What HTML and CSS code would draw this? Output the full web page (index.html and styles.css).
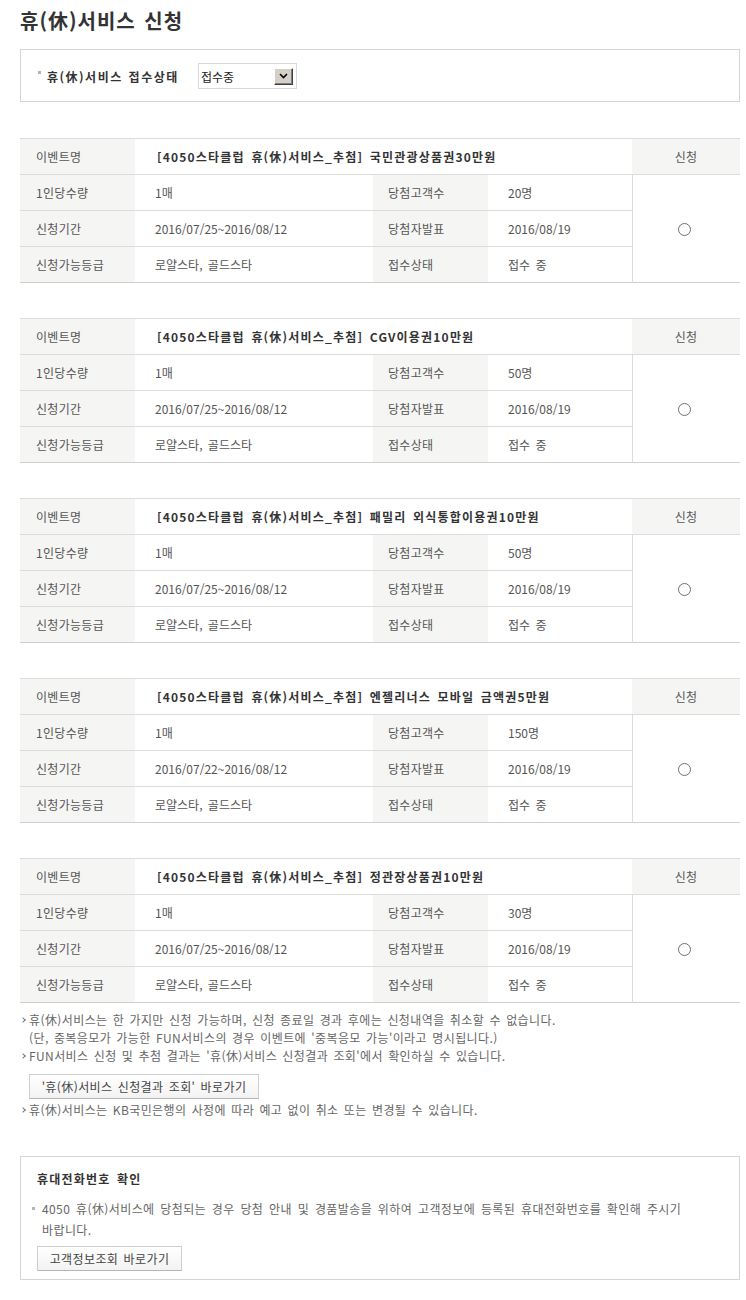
FILE: index.html
```html
<!DOCTYPE html>
<html lang="ko">
<head>
<meta charset="utf-8">
<title>휴(休)서비스 신청</title>
<link rel="stylesheet" href="styles.css">
</head>
<body>
<div class="page">
  <h1 class="title">휴(休)서비스 신청</h1>

  <div class="filter">
    <span class="filter-label"><i class="dot"></i>휴(休)서비스 접수상태</span>
    <div class="select">
      <span class="select-text">접수중</span>
      <span class="select-btn"><svg width="9" height="6" viewBox="0 0 9 6"><path d="M1 1 L4.5 4.5 L8 1" fill="none" stroke="#000" stroke-width="1.6"/></svg></span>
    </div>
  </div>

  <table class="event">
    <colgroup><col class="c1"><col class="c2"><col class="c3"><col class="c4"><col class="c5"></colgroup>
    <tr><th>이벤트명</th><td colspan="3" class="name">[4050스타클럽 휴(休)서비스_추첨] 국민관광상품권30만원</td><th class="apply">신청</th></tr>
    <tr><th>1인당수량</th><td>1매</td><th>당첨고객수</th><td>20명</td><td rowspan="3" class="radio-cell"><span class="radio"></span></td></tr>
    <tr><th>신청기간</th><td>2016/07/25~2016/08/12</td><th>당첨자발표</th><td>2016/08/19</td></tr>
    <tr><th>신청가능등급</th><td>로얄스타, 골드스타</td><th>접수상태</th><td>접수 중</td></tr>
  </table>

  <table class="event">
    <colgroup><col class="c1"><col class="c2"><col class="c3"><col class="c4"><col class="c5"></colgroup>
    <tr><th>이벤트명</th><td colspan="3" class="name">[4050스타클럽 휴(休)서비스_추첨] CGV이용권10만원</td><th class="apply">신청</th></tr>
    <tr><th>1인당수량</th><td>1매</td><th>당첨고객수</th><td>50명</td><td rowspan="3" class="radio-cell"><span class="radio"></span></td></tr>
    <tr><th>신청기간</th><td>2016/07/25~2016/08/12</td><th>당첨자발표</th><td>2016/08/19</td></tr>
    <tr><th>신청가능등급</th><td>로얄스타, 골드스타</td><th>접수상태</th><td>접수 중</td></tr>
  </table>

  <table class="event">
    <colgroup><col class="c1"><col class="c2"><col class="c3"><col class="c4"><col class="c5"></colgroup>
    <tr><th>이벤트명</th><td colspan="3" class="name">[4050스타클럽 휴(休)서비스_추첨] 패밀리 외식통합이용권10만원</td><th class="apply">신청</th></tr>
    <tr><th>1인당수량</th><td>1매</td><th>당첨고객수</th><td>50명</td><td rowspan="3" class="radio-cell"><span class="radio"></span></td></tr>
    <tr><th>신청기간</th><td>2016/07/25~2016/08/12</td><th>당첨자발표</th><td>2016/08/19</td></tr>
    <tr><th>신청가능등급</th><td>로얄스타, 골드스타</td><th>접수상태</th><td>접수 중</td></tr>
  </table>

  <table class="event">
    <colgroup><col class="c1"><col class="c2"><col class="c3"><col class="c4"><col class="c5"></colgroup>
    <tr><th>이벤트명</th><td colspan="3" class="name">[4050스타클럽 휴(休)서비스_추첨] 엔젤리너스 모바일 금액권5만원</td><th class="apply">신청</th></tr>
    <tr><th>1인당수량</th><td>1매</td><th>당첨고객수</th><td>150명</td><td rowspan="3" class="radio-cell"><span class="radio"></span></td></tr>
    <tr><th>신청기간</th><td>2016/07/22~2016/08/12</td><th>당첨자발표</th><td>2016/08/19</td></tr>
    <tr><th>신청가능등급</th><td>로얄스타, 골드스타</td><th>접수상태</th><td>접수 중</td></tr>
  </table>

  <table class="event">
    <colgroup><col class="c1"><col class="c2"><col class="c3"><col class="c4"><col class="c5"></colgroup>
    <tr><th>이벤트명</th><td colspan="3" class="name">[4050스타클럽 휴(休)서비스_추첨] 정관장상품권10만원</td><th class="apply">신청</th></tr>
    <tr><th>1인당수량</th><td>1매</td><th>당첨고객수</th><td>30명</td><td rowspan="3" class="radio-cell"><span class="radio"></span></td></tr>
    <tr><th>신청기간</th><td>2016/07/25~2016/08/12</td><th>당첨자발표</th><td>2016/08/19</td></tr>
    <tr><th>신청가능등급</th><td>로얄스타, 골드스타</td><th>접수상태</th><td>접수 중</td></tr>
  </table>

  <ul class="notes">
    <li>휴(休)서비스는 한 가지만 신청 가능하며, 신청 종료일 경과 후에는 신청내역을 취소할 수 없습니다.<br>(단, 중복응모가 가능한 FUN서비스의 경우 이벤트에 '중복응모 가능'이라고 명시됩니다.)</li>
    <li>FUN서비스 신청 및 추첨 결과는 '휴(休)서비스 신청결과 조회'에서 확인하실 수 있습니다.
      <div class="btn-row"><button class="btn" type="button">'휴(休)서비스 신청결과 조회' 바로가기</button></div>
    </li>
    <li>휴(休)서비스는 KB국민은행의 사정에 따라 예고 없이 취소 또는 변경될 수 있습니다.</li>
  </ul>

  <div class="phone">
    <h2 class="phone-title">휴대전화번호 확인</h2>
    <p class="phone-note">4050 휴(休)서비스에 당첨되는 경우 당첨 안내 및 경품발송을 위하여 고객정보에 등록된 휴대전화번호를 확인해 주시기<br>바랍니다.</p>
    <button class="btn" type="button">고객정보조회 바로가기</button>
  </div>
</div>
</body>
</html>
```

FILE: styles.css
```css
* { box-sizing: border-box; }

body {
  margin: 0;
  background: #fff;
  font-family: "Noto Sans CJK KR", "Noto Sans", sans-serif;
  font-size: 12px;
  color: #555;
  letter-spacing: 0.4px;
  word-spacing: 1.5px;
}

.page {
  width: 720px;
  margin-left: 20px;
  padding-bottom: 20px;
}

.title {
  margin: 9px 0 0;
  font-size: 20px;
  line-height: 24px;
  font-weight: bold;
  color: #333;
  letter-spacing: 1px;
  word-spacing: 2px;
}

.filter {
  margin-top: 16px;
  height: 53px;
  border: 1px solid #d5d5d5;
  padding: 13px 15px 0;
  display: flex;
  align-items: flex-start;
}

.filter-label {
  display: flex;
  align-items: center;
  width: 162px;
  height: 26px;
  font-weight: bold;
  color: #333;
  letter-spacing: 1.5px;
  word-spacing: 1px;
}

.dot {
  display: inline-block;
  width: 3px;
  height: 3px;
  background: #b5b5b5;
  margin: 0 6px 7px 2px;
}

.select {
  width: 99px;
  height: 26px;
  border: 1px solid #d8d8d8;
  display: flex;
  align-items: center;
  justify-content: space-between;
  padding: 0 3px 0 2px;
  color: #222;
  letter-spacing: 0;
}

.select-btn {
  width: 19px;
  height: 17px;
  background: #d4d0c8;
  border: 1px solid;
  border-color: #fff #404040 #404040 #fff;
  box-shadow: inset -1px -1px 0 #808080;
  display: flex;
  align-items: center;
  justify-content: center;
}

.event {
  width: 720px;
  border-collapse: collapse;
  table-layout: fixed;
  margin-top: 35px;
  border-top: 1px solid #dcdcdc;
  border-bottom: 1px solid #cfcfcf;
}

.filter + .event { margin-top: 36px; }

.c1 { width: 115px; }
.c2 { width: 238px; }
.c3 { width: 115px; }
.c4 { width: 144px; }
.c5 { width: 108px; }

.event th,
.event td {
  height: 36px;
  padding: 0 0 0 20px;
  border-top: 1px solid #dcdcdc;
  text-align: left;
  font-weight: normal;
  white-space: nowrap;
  line-height: 16px;
  letter-spacing: 0;
  word-spacing: 2px;
}

.event th {
  background: #f5f5f4;
  padding-left: 16px;
  letter-spacing: 0.3px;
}

.event th:nth-child(3) { padding-left: 15px; }

.event td.name {
  font-weight: bold;
  color: #333;
  padding-left: 22px;
  letter-spacing: 1.2px;
  word-spacing: 2px;
}

.event th.apply {
  text-align: center;
  padding: 0;
}

.event td.radio-cell {
  padding: 0 4px 2px 0;
  text-align: center;
  border-left: 1px solid #dcdcdc;
  background: #fff;
}

.radio {
  display: inline-block;
  width: 13px;
  height: 13px;
  border: 1px solid #707070;
  border-radius: 50%;
  vertical-align: middle;
}

.notes {
  list-style: none;
  margin: 8px 0 0;
  padding: 0;
  color: #666;
  line-height: 18px;
}

.notes li {
  position: relative;
  padding-left: 9px;
}

.notes li::before {
  content: "";
  position: absolute;
  left: 1px;
  top: 7px;
  width: 3px;
  height: 3px;
  border-right: 1px solid #777;
  border-top: 1px solid #777;
  transform: rotate(45deg);
}

.btn-row {
  padding: 9px 0 2px;
}

.btn {
  font-family: inherit;
  font-size: 12px;
  color: #444;
  letter-spacing: 0.4px;
  word-spacing: 1.5px;
  height: 25px;
  padding: 0 8px;
  border: 1px solid #cfcfcf;
  border-bottom-color: #b5b5b5;
  background: linear-gradient(#ffffff, #f3f3f3);
  line-height: 23px;
  cursor: pointer;
  display: block;
  white-space: nowrap;
}

.notes .btn { width: 230px; }

.phone {
  margin-top: 37px;
  border: 1px solid #d5d5d5;
  padding: 13px 16px 8px;
}

.phone-title {
  margin: 0;
  font-size: 12px;
  line-height: 18px;
  font-weight: bold;
  color: #333;
  letter-spacing: 1.2px;
  word-spacing: 2px;
}

.phone-note {
  margin: 10px 0 6px;
  position: relative;
  padding-left: 5px;
  line-height: 21px;
  color: #666;
  word-spacing: 2px;
}

.phone-note::before {
  content: "";
  position: absolute;
  left: -5px;
  top: 9px;
  width: 3px;
  height: 3px;
  background: #b5b5b5;
}

.phone .btn { width: 145px; }
```
